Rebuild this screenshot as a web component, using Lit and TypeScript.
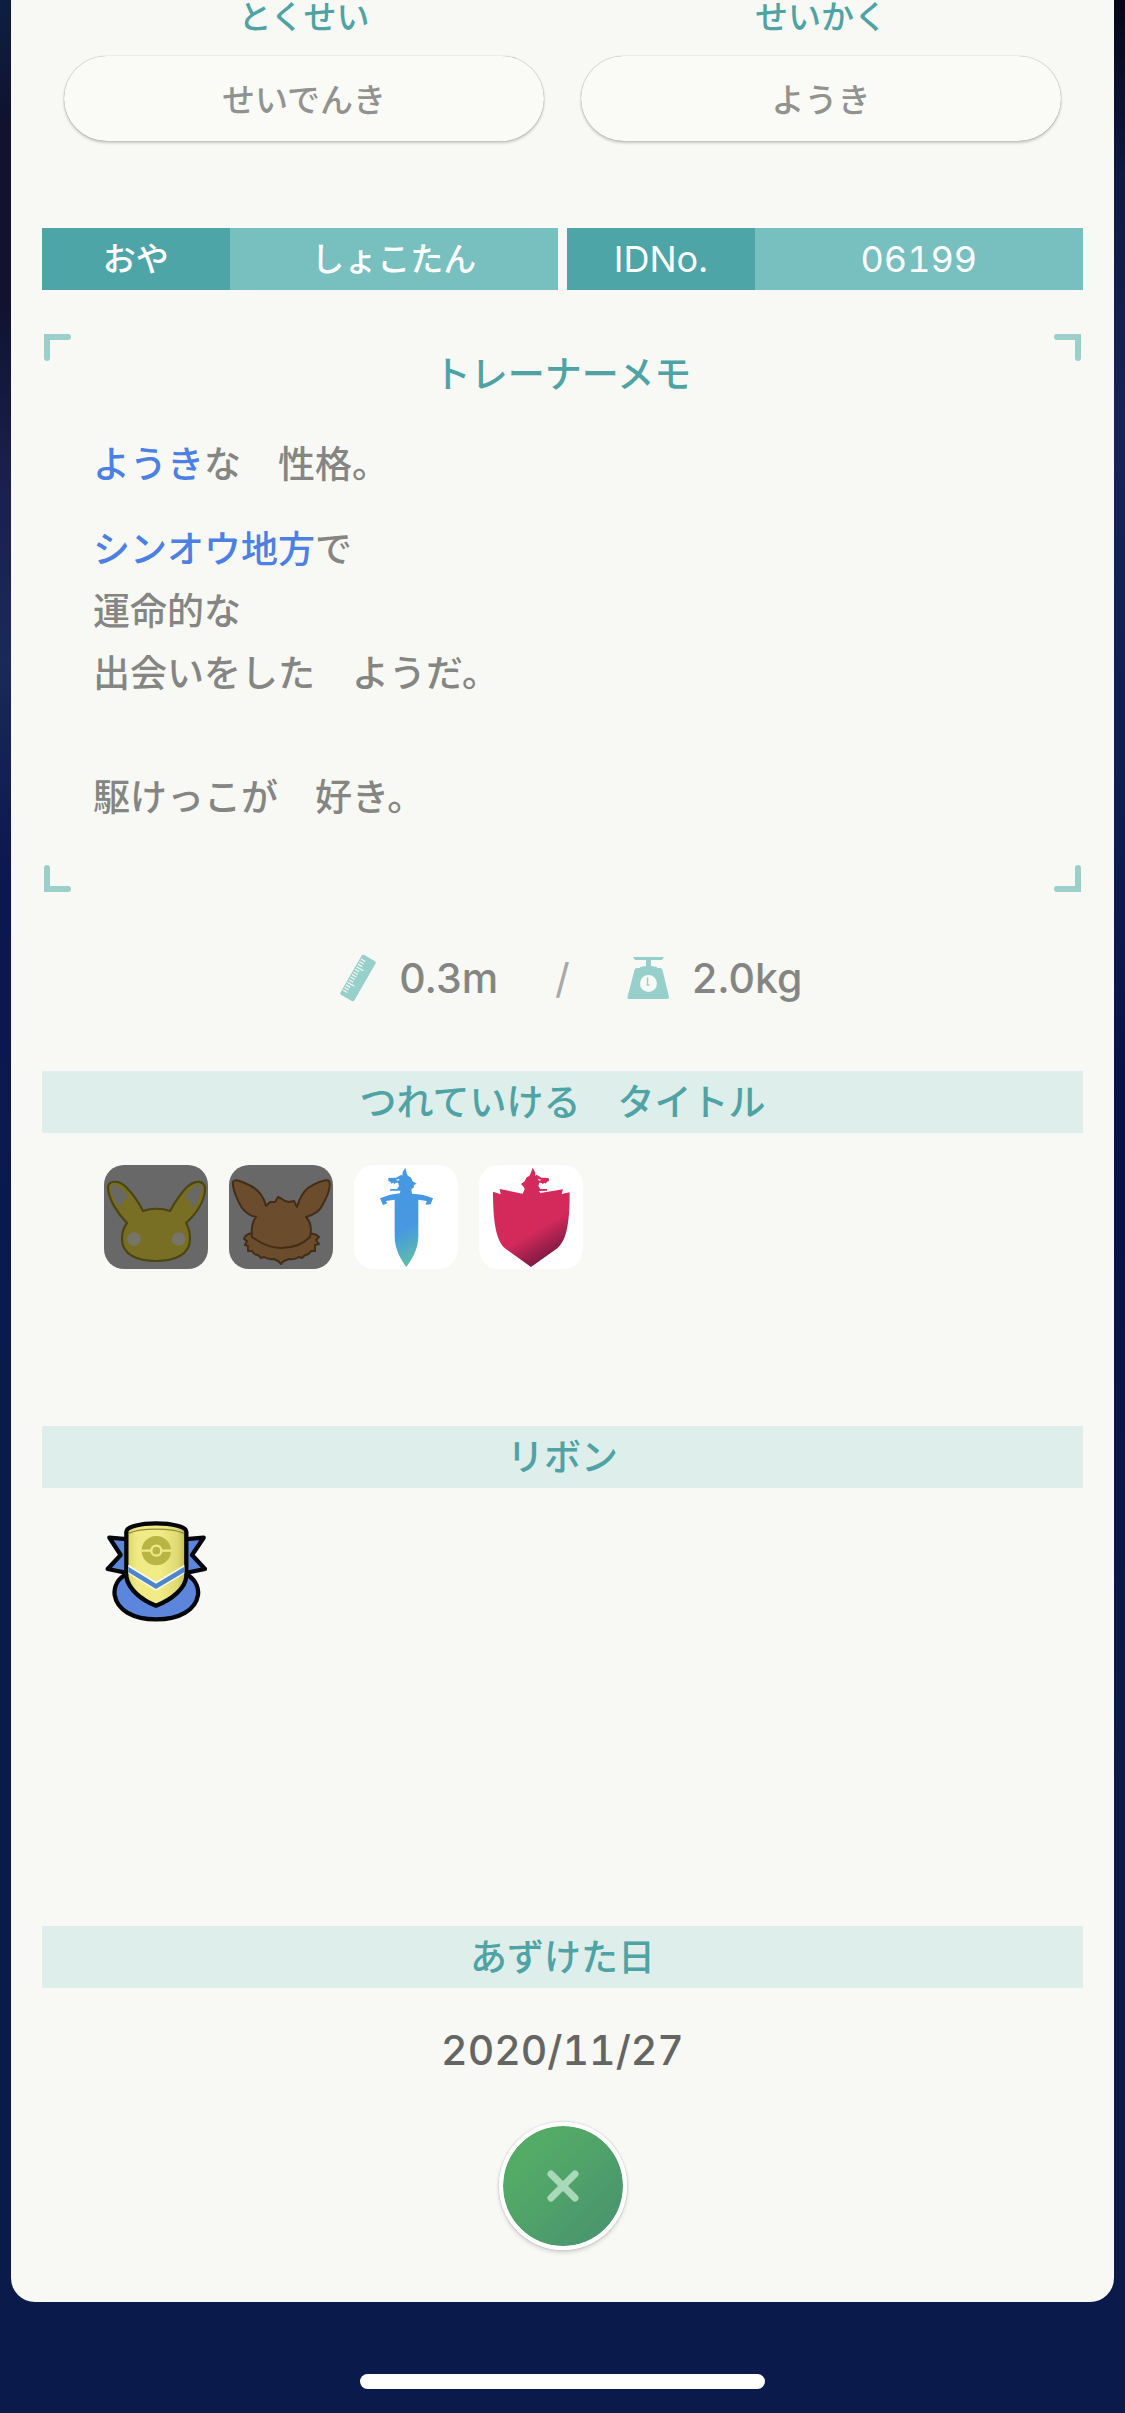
import { LitElement, html, css, svg } from "lit";
import { customElement, property } from "lit/decorators.js";

const rulerIcon = html`<svg class="ruler" viewBox="0 0 36 48" aria-hidden="true">
  <g transform="rotate(30 18 24)">
    <rect x="10" y="1" width="16" height="46" rx="2" fill="#97cfca" />
    ${[6, 9, 12, 15, 18, 21, 24, 27, 30, 33, 36, 39, 42].map(
      (y, i) => svg`<path d=${`M11 ${y}h${i % 6 === 3 ? 8 : 5}`} stroke="#f8f9f4" stroke-width="1.2" />`
    )}
  </g>
</svg>`;

const scaleIcon = html`<svg class="scale" viewBox="0 0 42 42" aria-hidden="true">
  <g fill="#97cfca">
    <path d="M6 0H37L35 3H8Z" />
    <path d="M19 2H24V9L30 10V12H13V10L19 9Z" />
    <path d="M10 11H33Q35 11 35.500 13L42 40Q42 42 40 42H2Q0 42 0.500 40L7.500 13Q8 11 10 11Z" />
  </g>
  <circle cx="21.500" cy="26.500" r="8.500" fill="#f8f9f4" />
  <path d="M20.500 20.500V28H22.500" fill="none" stroke="#97cfca" stroke-width="1.500" />
</svg>`;

const pikachuIcon = html`<svg class="tile dim" viewBox="0 0 104 104" role="img" aria-label="ピカチュウ">
  <path
    d="M39 46C34 36 28 28 22 22C15 15 5 15 4 22C4 34 14 49 23 58C20 62 18 68 18 74C18 90 34 96 52 96C70 96 86 90 86 74C86 68 85 63 82 58C92 49 101 36 101 23C100 15 91 15 83 22C77 28 71 37 66 46C58 43 47 43 39 46Z"
    fill="#786f24" stroke="#4b4512" stroke-width="2.200" stroke-linejoin="round" />
  <path d="M7 22Q9 18 15 22L25 32Q18 35 16 43Q8 33 7 22Z" fill="#686866" />
  <path d="M98 22Q96 18 90 22L80 32Q87 35 89 43Q97 33 98 22Z" fill="#686866" />
  <circle cx="30" cy="74" r="6.800" fill="#77746a" />
  <circle cx="74.500" cy="74" r="6.800" fill="#77746a" />
</svg>`;

const eeveeIcon = html`<svg class="tile dim" viewBox="0 0 104 104" role="img" aria-label="イーブイ">
  <g fill="#6b4c2c" stroke="#432d17" stroke-width="2" stroke-linejoin="round">
    <path
      d="M24 68Q16 69 15 74L18 76L16 80L19 81L19 86L23 86Q25 90 29 90L32 93L35 92Q40 95 45 94L49 96L52 99L55 96L60 94Q66 95 70 92L73 93L76 90Q80 90 82 86L86 86L86 80L90 79L87 75L90 72Q86 68 81 69Z" />
    <path
      d="M37 41C35 33 30 25 22 21C14 17 5 13 4 17C3 23 9 37 13 43C17 48 22 51 27 52C23 57 22 63 23 72C34 80 43 83 52 83C63 83 73 80 81 72C83 63 82 57 77 52C84 50 90 47 93 41C98 32 103 22 100 16C97 13 85 19 79 23C73 28 70 35 68 42L65 36L60 37L56 36L53 34L49 32L46 37L41 37Z" />
  </g>
</svg>`;

const wolfHead =
  "L181 122L150 122L151 117L171 117L177 108L174 98L167 99L163 103L160 98L154 101L152 96L145 93L145 84L168 83L184 74L187 78L188 66L196 53L200 70L204 78L212 82L218 94L230 101L222 105L221 113L214 117L216 131";

const swordIcon = html`<svg class="tile lit" viewBox="42 45 312 312" role="img" aria-label="ソード">
  <defs>
    <linearGradient id="sword" x1="0.350" y1="0" x2="0.650" y2="1">
      <stop offset="0.600" stop-color="#4699e0" />
      <stop offset="1" stop-color="#62c3a0" />
    </linearGradient>
  </defs>
  <path
    d=${`M180 130${wolfHead}Q250 132 279 145L272 163L257 164L260 153L235 149V258C235 300 214 330 199 351C184 330 164 300 164 258V149L137 153L142 160L129 165L120 145Q150 132 180 130Z`}
    fill="url(#sword)" />
  <path d="M167 90L179 86L175 92Z" fill="#fff" />
</svg>`;

const shieldIcon = html`<svg class="tile lit" viewBox="417 45 312 312" role="img" aria-label="シールド">
  <defs>
    <linearGradient id="shield" x1="0.300" y1="0" x2="0.750" y2="1">
      <stop offset="0.620" stop-color="#d42a5b" />
      <stop offset="1" stop-color="#64153b" />
    </linearGradient>
  </defs>
  <path
    d="M459 125L482 133L479 117L548 131L554 118L551 110L543 102L554 94L560 82L568 78L572 70L578 53L586 68L585 78L590 74L604 83L626 84L627 93L620 96L618 101L612 98L609 103L605 99L598 98L595 108L601 117L621 117L622 122L597 123L601 129L669 118L665 132L689 127C689 210 682 270 652 295L573 351L495 295C467 270 459 210 459 125Z"
    fill="url(#shield)" />
  <path d="M605 90L593 86L597 92Z" fill="#fff" />
</svg>`;

const ribbonIcon = html`<svg class="tile" viewBox="42 60 312 312" role="img" aria-label="リボン">
  <defs>
    <linearGradient id="gold">
      <stop offset="0" stop-color="#d9d468" />
      <stop offset="0.180" stop-color="#efea84" />
      <stop offset="0.550" stop-color="#f1ec86" />
      <stop offset="0.850" stop-color="#dfda72" />
      <stop offset="1" stop-color="#bdb850" />
    </linearGradient>
  </defs>
  <g fill="#5b86dc" stroke="#05060a" stroke-width="13" stroke-linejoin="round">
    <path d="M58 113L118 118V220L53 207L92 165Z" />
    <path d="M341 113L280 118V220L345 207L306 165Z" />
    <path d="M110 222C85 235 71 258 74 285C81 330 130 358 198 358C268 358 317 330 324 285C327 258 312 235 288 222Z" />
    <path
      d="M109 95C109 81 150 70 198 70C248 70 289 81 289 95V230C286 265 245 300 198 317C152 300 114 265 109 230Z"
      fill="url(#gold)" />
  </g>
  <path d="M116 100C150 83 246 83 282 100" fill="none" stroke="#8f8b3c" stroke-width="4" />
  <path d="M115 194L198 245L283 194V221L198 272L115 221Z" fill="#fbfbe8" />
  <path d="M115 200L198 251L283 200V217L198 267L115 217Z" fill="#4d86cb" />
  <circle cx="199" cy="152" r="44" fill="#b9b545" />
  <path d="M154 152H244" stroke="#efea84" stroke-width="7" />
  <circle cx="199" cy="152" r="15" fill="#b9b545" stroke="#efea84" stroke-width="7" />
</svg>`;

@customElement("stat-pill")
class StatPill extends LitElement {
  @property() label = "";
  @property() value = "";

  static styles = css`
    :host {
      display: block;
      text-align: center;
      font-size: 33px;
      line-height: 34px;
    }
    .label {
      margin: 0 0 22px;
      font-size: inherit;
      font-weight: 500;
      color: #4fa3a5;
    }
    .value {
      margin: 0;
      padding: 27px 40px 24px;
      border-radius: 43px;
      font-weight: 500;
      color: #92938f;
      background: #fafbf7;
      box-shadow: 0 0 1px rgba(0, 0, 0, 0.45), 0 2px 3px rgba(0, 0, 0, 0.2);
    }
  `;

  render() {
    return html`<h2 class="label">${this.label}</h2>
      <p class="value">${this.value}</p>`;
  }
}

@customElement("section-bar")
class SectionBar extends LitElement {
  static styles = css`
    :host {
      display: block;
    }
    .bar {
      margin: 0;
      padding-top: 2px;
      font-size: 37px;
      font-weight: 500;
      line-height: 60px;
      text-align: center;
      color: #4fa3a5;
      background: #deeeea;
    }
  `;

  render() {
    return html`<h2 class="bar"><slot></slot></h2>`;
  }
}

@customElement("app-root")
class AppRoot extends LitElement {
  static styles = css`
    :host {
      display: block;
      min-height: 100vh;
      box-sizing: border-box;
      padding-bottom: 24px;
      font-family: Inter, "Noto Sans CJK JP", sans-serif;
      background:
        linear-gradient(#060619, #0d1a44 180px, #14245a 420px, #0b1c52 850px, #06124a 1100px, #091a4b 1800px)
          right top / 12px 100% no-repeat,
        linear-gradient(#0e1f42, #10122e 120px, #10122e 300px, #1a1f4e 480px, #1a2958 660px, #0b1750 880px, #091a4b 1400px);
    }
    .card {
      margin: 0 11px;
      padding: 0 31px 52px;
      border-radius: 0 0 24px 24px;
      background: #f8f9f4;
    }
    .pills {
      display: grid;
      grid-template-columns: 1fr 1fr;
      gap: 37px;
      padding: 0 22px;
    }
    .owner {
      display: grid;
      grid-template-columns: 1fr 1fr;
      gap: 9px;
      margin: 87px 0 44px;
      font-size: 33px;
      font-weight: 500;
      line-height: 62px;
      text-align: center;
      color: #fff;
    }
    .pair {
      display: grid;
      grid-template-columns: 4fr 7fr;
    }
    .pair dt {
      background: #4da5a8;
    }
    .pair dd {
      margin: 0;
      background: #78bfbf;
    }
    .latin {
      font-size: 36px;
      font-weight: 400;
      font-variant-numeric: tabular-nums;
    }
    .memo {
      position: relative;
      margin: 0 2px;
      padding: 16px 49px 63px;
      color: #858683;
      font-size: 37px;
      font-weight: 500;
      line-height: 62px;
    }
    .memo h2 {
      margin: 0 0 34px;
      font-size: inherit;
      font-weight: 500;
      line-height: 50px;
      text-align: center;
      color: #4fa3a5;
    }
    .memo p {
      margin: 0;
    }
    .memo p + p {
      margin-top: 23px;
    }
    .memo em {
      font-style: normal;
      color: #4c80e2;
    }
    .corner {
      position: absolute;
      width: 27px;
      height: 27px;
      fill: none;
      stroke: #9acfca;
      stroke-width: 6;
      stroke-linecap: round;
      stroke-linejoin: miter;
    }
    .tl { top: 0; left: 0; }
    .tr { top: 0; right: 0; transform: rotate(90deg); }
    .br { bottom: 0; right: 0; transform: rotate(180deg); }
    .bl { bottom: 0; left: 0; transform: rotate(270deg); }
    .measures {
      display: grid;
      grid-template-columns: 1fr auto 1fr;
      column-gap: 57px;
      padding: 56px 0 63px;
      font-size: 41px;
      line-height: 60px;
      color: #858683;
    }
    .measure {
      display: flex;
      align-items: center;
      gap: 23px;
      font-weight: 500;
    }
    .height {
      justify-content: flex-end;
    }
    .slash {
      color: #a9aaa7;
    }
    .ruler {
      width: 36px;
      height: 48px;
    }
    .scale {
      width: 42px;
      height: 42px;
    }
    .tiles {
      display: flex;
      flex-wrap: wrap;
      gap: 21px;
      margin: 0;
      padding: 32px 62px 157px;
      list-style: none;
    }
    .ribbons {
      padding-bottom: 302px;
    }
    .tile {
      display: block;
      width: 104px;
      height: 104px;
      border-radius: 20px;
    }
    .dim {
      background: #676867;
    }
    .lit {
      background: #fff;
    }
    .date {
      display: block;
      margin: 32px 0 42px;
      font-size: 41px;
      font-weight: 500;
      line-height: 60px;
      text-align: center;
      font-variant-numeric: tabular-nums;
      color: #656663;
    }
    .close {
      display: grid;
      place-items: center;
      width: 128px;
      height: 128px;
      margin: 0 auto;
      padding: 0;
      border: 4px solid #fff;
      border-radius: 50%;
      background: linear-gradient(135deg, #54ab66 25%, #49936f 90%) border-box;
      background-clip: padding-box;
      box-shadow: 0 0 2px 1px rgba(0, 0, 0, 0.1), 0 3px 4px rgba(0, 0, 0, 0.12);
      cursor: pointer;
    }
    .close svg {
      width: 32px;
      height: 32px;
      stroke: #a9d9b9;
      stroke-width: 7;
      stroke-linecap: round;
    }
    .home {
      width: 36%;
      height: 15px;
      margin: 72px auto 0;
      border-radius: 8px;
      background: #fff;
    }
  `;

  private corner(place: string) {
    return html`<svg class="corner ${place}" viewBox="0 0 27 27" aria-hidden="true">
      <path d="M3 24V3H24" />
    </svg>`;
  }

  render() {
    return html`
      <main class="card">
        <section class="pills">
          <stat-pill label="とくせい" value="せいでんき"></stat-pill>
          <stat-pill label="せいかく" value="ようき"></stat-pill>
        </section>

        <dl class="owner">
          <div class="pair">
            <dt>おや</dt>
            <dd>しょこたん</dd>
          </div>
          <div class="pair latin">
            <dt>IDNo.</dt>
            <dd>06199</dd>
          </div>
        </dl>

        <section class="memo">
          ${["tl", "tr", "br", "bl"].map((place) => this.corner(place))}
          <h2>トレーナーメモ</h2>
          <p><em>ようき</em>な　性格。</p>
          <p>
            <em>シンオウ地方</em>で<br />運命的な<br />出会いをした　ようだ。<br /><br />駆けっこが　好き。
          </p>
        </section>

        <section class="measures">
          <span class="measure height">${rulerIcon}<span>0.3m</span></span>
          <span class="slash">/</span>
          <span class="measure">${scaleIcon}<span>2.0kg</span></span>
        </section>

        <section>
          <section-bar>つれていける　タイトル</section-bar>
          <ul class="tiles">
            ${[pikachuIcon, eeveeIcon, swordIcon, shieldIcon].map((icon) => html`<li>${icon}</li>`)}
          </ul>
        </section>

        <section>
          <section-bar>リボン</section-bar>
          <ul class="tiles ribbons">
            <li>${ribbonIcon}</li>
          </ul>
        </section>

        <section>
          <section-bar>あずけた日</section-bar>
          <time class="date" datetime="2020-11-27">2020/11/27</time>
        </section>

        <button class="close" type="button" aria-label="とじる">
          <svg viewBox="0 0 32 32" aria-hidden="true"><path d="M4 4L28 28M28 4L4 28" /></svg>
        </button>
      </main>
      <div class="home"></div>
    `;
  }
}
